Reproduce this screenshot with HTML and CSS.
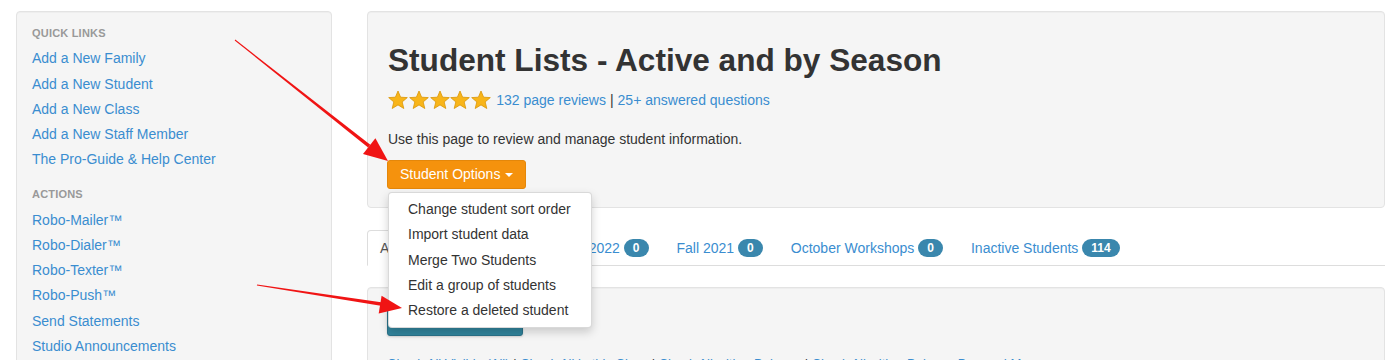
FILE: index.html
```html
<!DOCTYPE html>
<html lang="en">
<head>
<meta charset="utf-8">
<title>Student Lists - Active and by Season</title>
<link rel="stylesheet" href="styles.css">
</head>
<body>
<div class="page">
  <aside class="well sidebar">
    <div class="nav-header">Quick Links</div>
    <a class="nav-link" href="#">Add a New Family</a>
    <a class="nav-link" href="#">Add a New Student</a>
    <a class="nav-link" href="#">Add a New Class</a>
    <a class="nav-link" href="#">Add a New Staff Member</a>
    <a class="nav-link" href="#">The Pro-Guide &amp; Help Center</a>
    <div class="nav-header section">Actions</div>
    <a class="nav-link" href="#">Robo-Mailer™</a>
    <a class="nav-link" href="#">Robo-Dialer™</a>
    <a class="nav-link" href="#">Robo-Texter™</a>
    <a class="nav-link" href="#">Robo-Push™</a>
    <a class="nav-link" href="#">Send Statements</a>
    <a class="nav-link" href="#">Studio Announcements</a>
    <a class="nav-link" href="#">Email Log</a>
  </aside>

  <main class="main">
    <section class="well hero">
      <h1 class="title">Student Lists - Active and by Season</h1>
      <div class="rating">
        <span class="stars">
          <svg class="star" viewBox="0 0 20 20"><polygon points="10,1 12.6,7.2 19.3,7.6 14.2,11.9 15.8,18.5 10,14.9 4.2,18.5 5.8,11.9 0.7,7.6 7.4,7.2"/></svg>
          <svg class="star" viewBox="0 0 20 20"><polygon points="10,1 12.6,7.2 19.3,7.6 14.2,11.9 15.8,18.5 10,14.9 4.2,18.5 5.8,11.9 0.7,7.6 7.4,7.2"/></svg>
          <svg class="star" viewBox="0 0 20 20"><polygon points="10,1 12.6,7.2 19.3,7.6 14.2,11.9 15.8,18.5 10,14.9 4.2,18.5 5.8,11.9 0.7,7.6 7.4,7.2"/></svg>
          <svg class="star" viewBox="0 0 20 20"><polygon points="10,1 12.6,7.2 19.3,7.6 14.2,11.9 15.8,18.5 10,14.9 4.2,18.5 5.8,11.9 0.7,7.6 7.4,7.2"/></svg>
          <svg class="star" viewBox="0 0 20 20"><polygon points="10,1 12.6,7.2 19.3,7.6 14.2,11.9 15.8,18.5 10,14.9 4.2,18.5 5.8,11.9 0.7,7.6 7.4,7.2"/></svg>
        </span>
        <a class="link" href="#">132 page reviews</a><span class="sep">|</span><a class="link" href="#">25+ answered questions</a>
      </div>
      <p class="intro">Use this page to review and manage student information.</p>
      <div class="btn-group">
        <button class="btn btn-orange" type="button">Student Options<span class="caret"></span></button>
        <ul class="dropdown">
          <li><a href="#">Change student sort order</a></li>
          <li><a href="#">Import student data</a></li>
          <li><a href="#">Merge Two Students</a></li>
          <li><a href="#">Edit a group of students</a></li>
          <li><a href="#">Restore a deleted student</a></li>
        </ul>
      </div>
    </section>

    <ul class="tabs">
      <li class="tab active"><a href="#">Active Students<span class="badge">128</span></a></li>
      <li class="tab"><a href="#">Spring 2022<span class="badge">0</span></a></li>
      <li class="tab"><a href="#">Fall 2021<span class="badge">0</span></a></li>
      <li class="tab"><a href="#">October Workshops<span class="badge">0</span></a></li>
      <li class="tab"><a href="#">Inactive Students<span class="badge">114</span></a></li>
    </ul>

    <section class="well list">
      <button class="btn btn-teal" type="button">Email Selected</button>
      <div class="bulk-links">
        <a href="#">Check All Visible (All)</a> | <a href="#">Check All in this Class</a> | <a href="#">Check All with a Balance</a> | <a href="#">Check All with a Balance Due and More</a>
      </div>
    </section>
  </main>

  <svg class="annotations" viewBox="0 0 1396 360" width="1396" height="360">
    <polygon class="arrow" points="234.7,40.4 235.3,39.6 370.3,144.7 368.1,147.5"/>
    <polygon class="arrow" points="388,161 363,154 375.4,138.3"/>
    <polygon class="arrow" points="257.1,284.5 256.9,285.5 382.2,305.9 382.8,302.4"/>
    <polygon class="arrow" points="402,308 381.6,295.8 378.7,313.6"/>
  </svg>
</div>
</body>
</html>
```

FILE: styles.css
```css
* {
  box-sizing: border-box;
}

html, body {
  margin: 0;
  padding: 0;
  background: #ffffff;
  height: 360px;
  overflow: hidden;
}

body {
  font-family: "Liberation Sans", Arial, Helvetica, sans-serif;
  font-size: 14px;
  color: #333333;
}

a {
  text-decoration: none;
  color: #3a8dd0;
}

.page {
  position: relative;
  display: flex;
  align-items: flex-start;
  gap: 35px;
  padding: 11px 11px 0 16px;
}

.well {
  background: #f5f5f5;
  border: 1px solid #e3e3e3;
  border-radius: 4px;
  box-shadow: inset 0 1px 1px rgba(0, 0, 0, 0.03);
}

/* Sidebar */
.sidebar {
  width: 316px;
  flex: none;
  display: flex;
  flex-direction: column;
  padding: 9px 15px 40px 15px;
}

.nav-header {
  height: 25.25px;
  line-height: 25.25px;
  font-size: 11px;
  font-weight: bold;
  color: #999999;
  text-transform: uppercase;
  letter-spacing: 0.2px;
}

.nav-header.section {
  margin-top: 9.75px;
}

.nav-link {
  height: 25.25px;
  line-height: 25.25px;
  font-size: 14px;
  color: #3a8dd0;
}

/* Main column */
.main {
  flex: 1;
  min-width: 0;
  display: flex;
  flex-direction: column;
}

.hero {
  padding: 30.5px 20px 18px 19px;
}

.title {
  margin: 0 0 0 1px;
  font-size: 31.6px;
  line-height: 35px;
  font-weight: bold;
  color: #333333;
}

.rating {
  margin-top: 11.5px;
  height: 22px;
  display: flex;
  align-items: center;
}

.stars {
  display: flex;
  gap: 0.8px;
  margin: 0 5px 0 1px;
}

.star {
  width: 20px;
  height: 20px;
  display: block;
}

.star polygon {
  fill: #f8b51a;
  stroke: #d99508;
  stroke-width: 0.8;
  stroke-linejoin: round;
}

.rating .link {
  color: #3a8dd0;
}

.sep {
  margin: 0 4px;
  color: #333333;
}

.intro {
  margin: 18px 0 11px 1px;
  line-height: 20px;
}

.btn-group {
  position: relative;
  display: flex;
}

.btn {
  font-family: inherit;
  font-size: 14px;
  line-height: 19px;
  padding: 4px 12px 4px 12px;
  border-radius: 3px;
  color: #ffffff;
  cursor: pointer;
  margin: 0;
}

.btn-orange {
  background: #f5920d;
  border: 1px solid #e4870a;
  height: 29px;
  display: flex;
  align-items: center;
}

.caret {
  display: inline-block;
  width: 0;
  height: 0;
  margin-left: 5px;
  margin-top: 1px;
  border-top: 4px solid #ffffff;
  border-left: 4px solid transparent;
  border-right: 4px solid transparent;
}

.dropdown {
  position: absolute;
  top: calc(100% + 3px);
  left: 1px;
  z-index: 10;
  margin: 0;
  padding: 4px 0;
  list-style: none;
  background: #ffffff;
  border: 1px solid rgba(0, 0, 0, 0.15);
  border-radius: 4px;
  box-shadow: 0 4px 10px rgba(0, 0, 0, 0.18);
  white-space: nowrap;
}

.dropdown a {
  display: block;
  padding: 0 20px 0 19px;
  height: 25.25px;
  line-height: 25.25px;
  color: #333333;
}

/* Tabs */
.tabs {
  display: flex;
  margin: 22px 0 0 0;
  padding: 0;
  list-style: none;
  border-bottom: 1px solid #dddddd;
}

.tab {
  margin-right: 2px;
  margin-bottom: -1px;
}

.tab a {
  display: flex;
  align-items: center;
  gap: 4px;
  padding: 7.5px 12px 8.5px 12px;
  line-height: 18px;
  border: 1px solid transparent;
  border-radius: 4px 4px 0 0;
  color: #3a8dd0;
}

.tab.active a {
  padding-right: 9px;
  background: #ffffff;
  color: #555555;
  border-color: #dddddd #dddddd transparent #dddddd;
}

.badge {
  display: inline-block;
  height: 18px;
  line-height: 18px;
  padding: 0 9px;
  border-radius: 9px;
  background: #3a87ad;
  color: #ffffff;
  font-size: 12px;
  font-weight: bold;
}

/* List panel */
.list {
  margin-top: 21px;
  padding: 18px 20px 30px 19px;
  min-height: 120px;
}

.btn-teal {
  background: #31849c;
  border: 1px solid #2a7289;
  height: 30px;
  width: 136px;
  box-shadow: 0 1px 2px rgba(0, 0, 0, 0.15);
}

.bulk-links {
  margin-top: 18.5px;
  font-size: 13px;
  line-height: 18px;
  color: #333333;
}

.bulk-links a {
  color: #3a8dd0;
}

/* Annotation overlay */
.annotations {
  position: absolute;
  left: 0;
  top: 0;
  pointer-events: none;
  z-index: 20;
}

.arrow {
  fill: #f01414;
}
```
